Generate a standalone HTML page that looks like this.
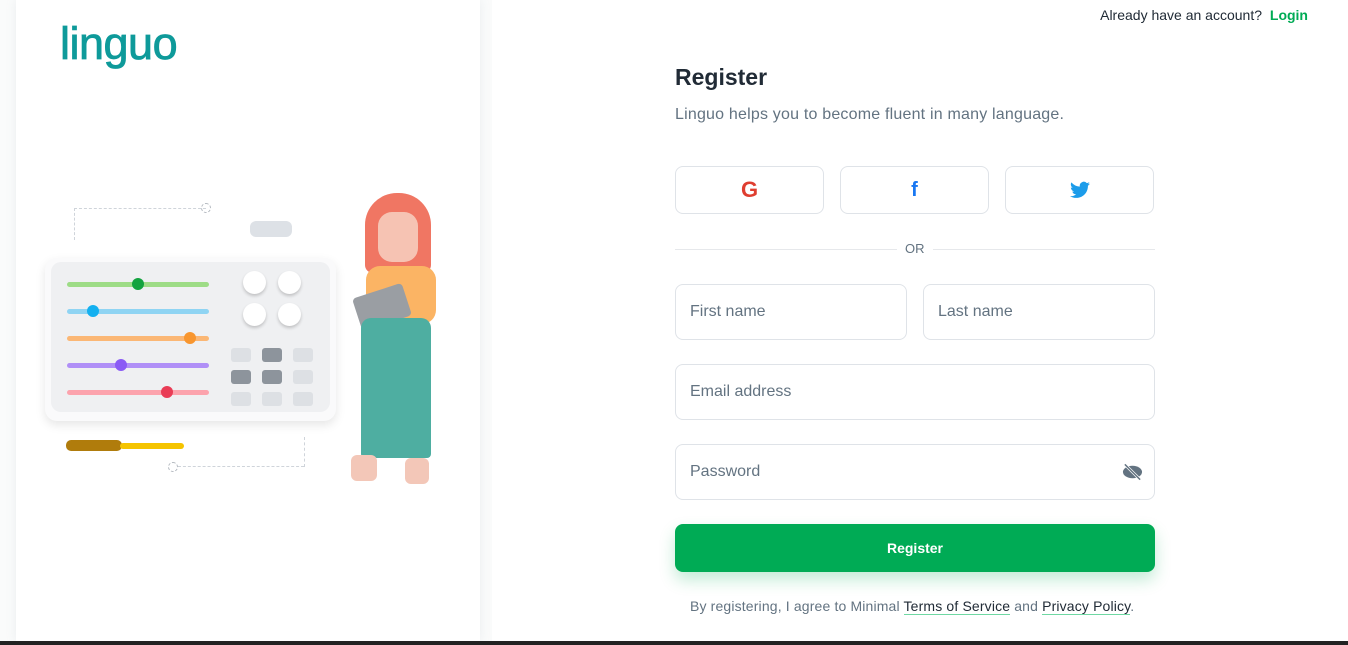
<!DOCTYPE html>
<html><head><meta charset="utf-8"><style>
*{box-sizing:border-box;margin:0;padding:0}
body{width:1348px;height:645px;overflow:hidden;background:#fff;font-family:"Liberation Sans",sans-serif;position:relative;color:#212b36}
.left{position:absolute;left:0;top:0;width:492px;height:641px;background:#fafbfb}
.card{position:absolute;left:16px;top:0;width:464px;height:641px;background:#fff;box-shadow:0 0 10px rgba(145,158,171,.14)}
.logo{position:absolute;left:60px;top:18px;font-size:45px;color:#0e9a9a;letter-spacing:-0.5px;-webkit-text-stroke:0.8px #0e9a9a}
.top{position:absolute;right:40px;top:7px;font-size:14px;color:#212b36}
.top b{color:#00ab55;margin-left:4px}
h1{position:absolute;left:675px;top:64px;font-size:23px;font-weight:bold}
.sub{position:absolute;left:675px;top:106px;font-size:16px;color:#637381;letter-spacing:0.2px}
.soc{position:absolute;top:166px;width:149px;height:48px;border:1px solid #dfe3e8;border-radius:8px;display:flex;align-items:center;justify-content:center}
.or{position:absolute;left:675px;top:249px;width:480px;height:1px;background:#e6e8eb}
.or span{position:absolute;left:222px;top:-8px;background:#fff;padding:0 8px;font-size:13px;color:#637381}
.in{position:absolute;height:56px;border:1px solid #dfe3e8;border-radius:8px;font-size:16px;color:#637381;padding-left:14px;line-height:54px}
.btn{position:absolute;left:675px;top:524px;width:480px;height:48px;background:#00ab55;border-radius:8px;color:#fff;font-weight:bold;font-size:14px;text-align:center;line-height:48px;box-shadow:0 8px 16px rgba(0,171,85,.24)}
.terms{position:absolute;left:690px;top:598px;font-size:14px;color:#637381;letter-spacing:0.15px}
.terms u{color:#212b36;text-decoration:none;border-bottom:1px solid #6fd8a3}
.bar{position:absolute;left:0;top:641px;width:1348px;height:4px;background:#222}
.slider{position:absolute;left:67px;height:5px;width:142px;border-radius:3px}
.dot{position:absolute;width:12px;height:12px;border-radius:50%;top:-4px}
.knob{position:absolute;width:23px;height:23px;border-radius:50%;background:#fff;box-shadow:0 2px 3px rgba(0,0,0,.2)}
.key{position:absolute;width:20px;height:14px;border-radius:3px;background:#dde0e4}
</style></head><body>
<div class="left"></div>
<div class="card"></div>
<div class="logo">linguo</div>
<div style="position:absolute;left:74px;top:208px;width:132px;height:32px;border-top:1px dashed #cfd4da;border-left:1px dashed #cfd4da"></div>
<div style="position:absolute;left:201px;top:203px;width:10px;height:10px;border:1px dashed #b0b6bd;border-radius:50%"></div>
<div style="position:absolute;left:250px;top:221px;width:42px;height:16px;border-radius:6px;background:#dde1e6"></div>
<div style="position:absolute;left:45px;top:258px;width:291px;height:163px;border-radius:12px;background:#fafafb;box-shadow:0 4px 10px rgba(0,0,0,.1)"></div>
<div style="position:absolute;left:51px;top:262px;width:279px;height:150px;border-radius:10px;background:#eff0f2"></div>
<div class="slider" style="top:282px;background:#9ddc86"><div class="dot" style="left:65px;background:#13a33f"></div></div>
<div class="slider" style="top:309px;background:#8fd4f3"><div class="dot" style="left:20px;background:#14b0f0"></div></div>
<div class="slider" style="top:336px;background:#fbb775"><div class="dot" style="left:117px;background:#f8962f"></div></div>
<div class="slider" style="top:363px;background:#b08ff7"><div class="dot" style="left:48px;background:#8a5af5"></div></div>
<div class="slider" style="top:390px;background:#fca3ad"><div class="dot" style="left:94px;background:#e93c56"></div></div>
<div class="knob" style="left:243px;top:271px"></div><div class="knob" style="left:278px;top:271px"></div>
<div class="knob" style="left:243px;top:303px"></div><div class="knob" style="left:278px;top:303px"></div>
<div class="key" style="left:231px;top:348px"></div><div class="key" style="left:262px;top:348px;background:#8d949c"></div><div class="key" style="left:293px;top:348px"></div>
<div class="key" style="left:231px;top:370px;background:#8d949c"></div><div class="key" style="left:262px;top:370px;background:#8d949c"></div><div class="key" style="left:293px;top:370px"></div>
<div class="key" style="left:231px;top:392px"></div><div class="key" style="left:262px;top:392px"></div><div class="key" style="left:293px;top:392px"></div>
<div style="position:absolute;left:66px;top:440px;width:56px;height:11px;border-radius:5px;background:#b07c0c"></div>
<div style="position:absolute;left:120px;top:443px;width:64px;height:6px;background:#f5c400;border-radius:3px"></div>
<div style="position:absolute;left:304px;top:437px;width:1px;height:30px;border-left:1px dashed #cfd4da"></div>
<div style="position:absolute;left:178px;top:466px;width:126px;border-top:1px dashed #cfd4da"></div>
<div style="position:absolute;left:168px;top:462px;width:10px;height:10px;border:1px dashed #b0b6bd;border-radius:50%"></div>
<div style="position:absolute;left:365px;top:193px;width:66px;height:80px;border-radius:32px 32px 8px 8px;background:#f07663"></div>
<div style="position:absolute;left:378px;top:212px;width:40px;height:50px;border-radius:14px;background:#f6c3b3"></div>
<div style="position:absolute;left:366px;top:266px;width:70px;height:58px;border-radius:14px;background:#fbb464"></div>
<div style="position:absolute;left:356px;top:290px;width:52px;height:34px;background:#9a9ea3;border-radius:4px;transform:rotate(-18deg)"></div>
<div style="position:absolute;left:361px;top:318px;width:70px;height:140px;border-radius:10px 10px 4px 4px;background:#4eaea1"></div>
<div style="position:absolute;left:351px;top:455px;width:26px;height:26px;border-radius:6px;background:#f3c7b8"></div>
<div style="position:absolute;left:405px;top:458px;width:24px;height:26px;border-radius:6px;background:#f3c7b8"></div>

<div class="top">Already have an account? <b>Login</b></div>
<h1>Register</h1>
<div class="sub">Linguo helps you to become fluent in many language.</div>
<div class="soc" style="left:675px"><span style="color:#df3e30;font-weight:bold;font-size:22px">G</span></div>
<div class="soc" style="left:840px"><span style="color:#1877f2;font-weight:bold;font-size:20px">f</span></div>
<div class="soc" style="left:1005px"><svg width="20" height="18" viewBox="0 0 24 20"><path fill="#1c9cea" d="M24 2.4a9.8 9.8 0 0 1-2.8.8A4.9 4.9 0 0 0 23.3.5a9.9 9.9 0 0 1-3.1 1.2A4.9 4.9 0 0 0 11.8 6 14 14 0 0 1 1.7.9a4.9 4.9 0 0 0 1.5 6.6A4.9 4.9 0 0 1 1 6.9a4.9 4.9 0 0 0 3.9 4.8 4.9 4.9 0 0 1-2.2.1 4.9 4.9 0 0 0 4.6 3.4A9.9 9.9 0 0 1 0 17.3 14 14 0 0 0 7.5 19.5c9.1 0 14-7.5 14-14v-.6A10 10 0 0 0 24 2.4z"/></svg></div>
<div class="or"><span>OR</span></div>
<div class="in" style="left:675px;top:284px;width:232px">First name</div>
<div class="in" style="left:923px;top:284px;width:232px">Last name</div>
<div class="in" style="left:675px;top:364px;width:480px">Email address</div>
<div class="in" style="left:675px;top:444px;width:480px">Password
<svg style="position:absolute;right:11px;top:18px" width="21" height="18" viewBox="0 0 22 18"><ellipse cx="11" cy="9" rx="10" ry="6.5" fill="#637381"/><line x1="3" y1="1" x2="19" y2="17" stroke="#fff" stroke-width="3"/><line x1="3" y1="1" x2="19" y2="17" stroke="#637381" stroke-width="1.6"/></svg></div>
<div class="btn">Register</div>
<div class="terms">By registering, I agree to Minimal <u>Terms of Service</u> and <u>Privacy Policy</u>.</div>
<div class="bar"></div>
</body></html>
